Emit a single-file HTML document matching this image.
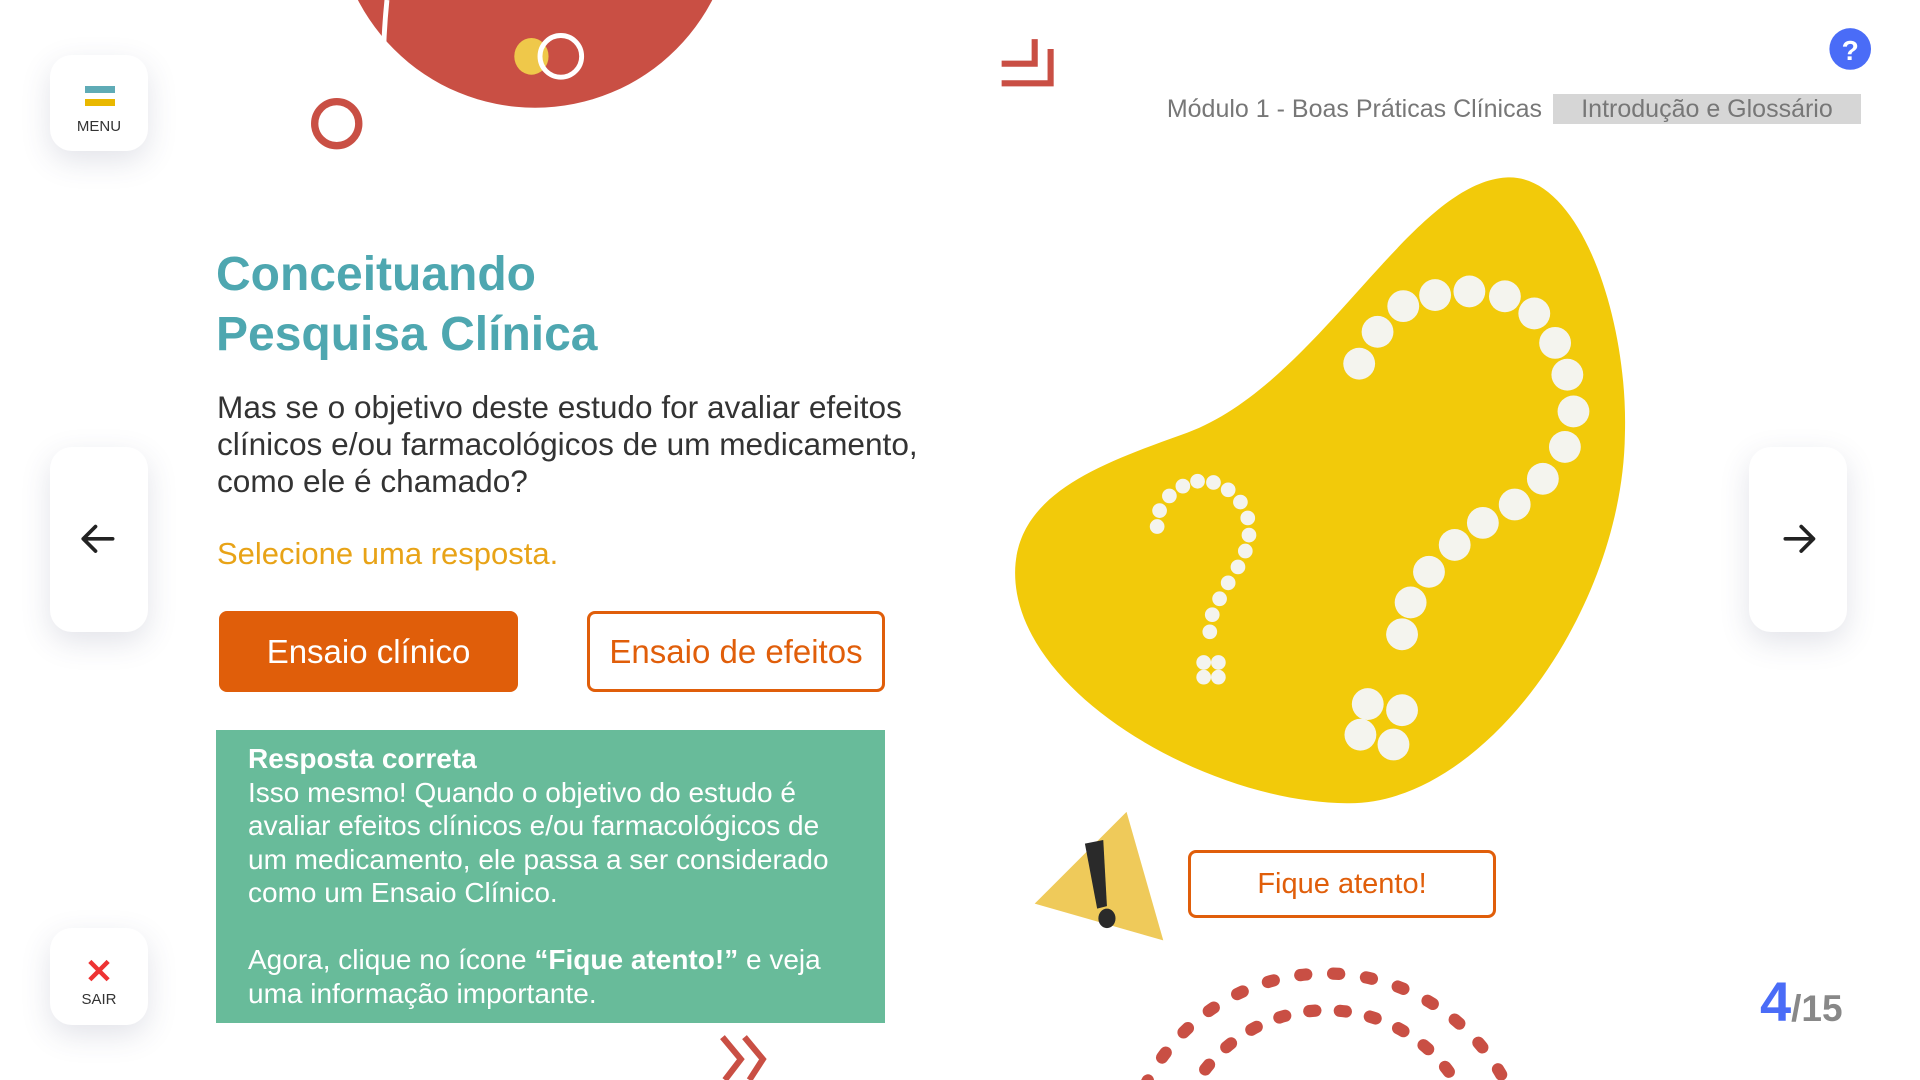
<!DOCTYPE html>
<html><head><meta charset="utf-8"><style>
*{margin:0;padding:0;box-sizing:border-box}
html,body{width:1920px;height:1080px;overflow:hidden}
body{background:#fff;font-family:"Liberation Sans",sans-serif;position:relative;color:#333}
.abs{position:absolute}
.card{position:absolute;background:#fff;border-radius:22px;box-shadow:0 10px 30px rgba(60,70,110,0.15)}
.btn{position:absolute;display:flex;align-items:center;justify-content:center;border-radius:8px;font-size:33px}
</style></head><body>
<svg class="abs" style="left:0;top:0;display:block" width="1920" height="1080" viewBox="0 0 1568 882">
<circle cx="437" cy="-75" r="163" fill="#c94f44"/>
<path d="M316,0 Q310,60 316,110" stroke="#fff" stroke-width="4" fill="none"/>
<ellipse cx="434" cy="46" rx="14" ry="15" fill="#efc84a"/>
<circle cx="458" cy="46" r="17" fill="none" stroke="#fff" stroke-width="4"/>
<circle cx="275" cy="101" r="18" fill="none" stroke="#c94f44" stroke-width="6"/>
<path d="M818,52 H845 V32 M818,68 H858 V40" stroke="#c94f44" stroke-width="5" fill="none"/>
<path d="M1230,145 C1290,141 1330,260 1327,355 C1325,500 1210,658 1100,656 C985,655 829,565 829,468 C829,405 895,380 965,355 C1075,318 1150,150 1230,145 Z" fill="#f2ca0a"/>
<g fill="#f4f4ee">
<circle cx="1110" cy="297" r="13"/><circle cx="1125" cy="271" r="13"/><circle cx="1146" cy="250" r="13"/><circle cx="1172" cy="241" r="13"/><circle cx="1200" cy="238" r="13"/><circle cx="1229" cy="242" r="13"/><circle cx="1253" cy="256" r="13"/><circle cx="1270" cy="280" r="13"/><circle cx="1280" cy="306" r="13"/><circle cx="1285" cy="336" r="13"/><circle cx="1278" cy="365" r="13"/><circle cx="1260" cy="391" r="13"/><circle cx="1237" cy="412" r="13"/><circle cx="1211" cy="427" r="13"/><circle cx="1188" cy="445" r="13"/><circle cx="1167" cy="467" r="13"/><circle cx="1152" cy="492" r="13"/><circle cx="1145" cy="518" r="13"/>
<circle cx="1117" cy="575" r="13"/><circle cx="1145" cy="580" r="13"/><circle cx="1111" cy="600" r="13"/><circle cx="1138" cy="608" r="13"/>
<circle cx="945" cy="430" r="6"/><circle cx="947" cy="417" r="6"/><circle cx="955" cy="405" r="6"/><circle cx="966" cy="397" r="6"/><circle cx="978" cy="393" r="6"/><circle cx="991" cy="394" r="6"/><circle cx="1003" cy="400" r="6"/><circle cx="1013" cy="410" r="6"/><circle cx="1019" cy="423" r="6"/><circle cx="1020" cy="437" r="6"/><circle cx="1017" cy="450" r="6"/><circle cx="1011" cy="463" r="6"/><circle cx="1003" cy="476" r="6"/><circle cx="996" cy="489" r="6"/><circle cx="990" cy="502" r="6"/><circle cx="988" cy="516" r="6"/>
<circle cx="983" cy="541" r="6"/><circle cx="995" cy="541" r="6"/><circle cx="983" cy="553" r="6"/><circle cx="995" cy="553" r="6"/>
</g>
<polygon points="920,663 950,768 845,738" fill="#efca5a"/>
<polygon points="886,689 901,686 904,740 896,742" fill="#2a2a2a"/>
<ellipse cx="904" cy="750" rx="7" ry="8" fill="#2a2a2a"/>
<circle cx="1083" cy="960" r="165" fill="none" stroke="#c94f44" stroke-width="10" stroke-linecap="round" stroke-dasharray="5 22"/>
<circle cx="1083" cy="950" r="125" fill="none" stroke="#c94f44" stroke-width="10" stroke-linecap="round" stroke-dasharray="5 20"/>
<path d="M590,847 L605,865 L592,882 M608,847 L623,865 L612,882" stroke="#c94f44" stroke-width="5" fill="none"/>
<circle cx="1511" cy="40" r="17" fill="#4a6cf7"/>
<text x="1511" y="49" font-size="23" font-weight="bold" fill="#fff" text-anchor="middle" font-family="Liberation Sans">?</text>
<path d="M92,440 H68 M78,430 L68,440 L78,450" stroke="#222" stroke-width="3" fill="none" stroke-linecap="round" stroke-linejoin="round"/>
<path d="M1458,440 H1481 M1471,430 L1481,440 L1471,450" stroke="#222" stroke-width="3" fill="none" stroke-linecap="round" stroke-linejoin="round"/>
</svg>

<div class="card" style="left:50px;top:55px;width:98px;height:96px"></div>
<div class="abs" style="left:85px;top:86px;width:30px;height:7px;background:#5fabb6"></div>
<div class="abs" style="left:85px;top:99px;width:30px;height:7px;background:#e9b800"></div>
<div class="abs" style="left:50px;top:118px;width:98px;text-align:center;font-size:15px;color:#333">MENU</div>

<div class="card" style="left:50px;top:447px;width:98px;height:185px;z-index:-1"></div>
<div class="card" style="left:1749px;top:447px;width:98px;height:185px;z-index:-1"></div>
<div class="card" style="left:50px;top:928px;width:98px;height:97px"></div>
<div class="abs" style="left:50px;top:952px;width:98px;text-align:center;font-size:34px;font-weight:bold;color:#e33">&#10005;</div>
<div class="abs" style="left:50px;top:991px;width:98px;text-align:center;font-size:15px;color:#333">SAIR</div>

<div class="abs" style="right:378px;top:94px;font-size:25px;color:#777;line-height:30px">Módulo 1 - Boas Práticas Clínicas</div>
<div class="abs" style="left:1553px;top:94px;width:308px;height:30px;background:#d6d6d6;color:#777;font-size:25px;line-height:30px;text-align:center">Introdução e Glossário</div>

<div class="abs" style="left:216px;top:245px;font-size:48px;font-weight:bold;color:#4ea7b0;line-height:60px">Conceituando<br>Pesquisa Clínica</div>
<div class="abs" style="left:217px;top:389px;font-size:31.6px;color:#333;line-height:37px">Mas se o objetivo deste estudo for avaliar efeitos<br>clínicos e/ou farmacológicos de um medicamento,<br>como ele é chamado?</div>
<div class="abs" style="left:217px;top:536px;font-size:31px;color:#e8a317;line-height:36px">Selecione uma resposta.</div>

<div class="btn" style="left:219px;top:611px;width:299px;height:81px;background:#e05e0a;color:#fff">Ensaio clínico</div>
<div class="btn" style="left:587px;top:611px;width:298px;height:81px;border:3px solid #e05e0a;color:#e05e0a">Ensaio de efeitos</div>

<div class="abs" style="left:216px;top:730px;width:669px;height:293px;background:#68bb9a;color:#fff;padding:12px 0 0 32px;font-size:28px;line-height:33.5px;overflow:hidden">
<b>Resposta correta</b><br>Isso mesmo! Quando o objetivo do estudo é<br>avaliar efeitos clínicos e/ou farmacológicos de<br>um medicamento, ele passa a ser considerado<br>como um Ensaio Clínico.<br><br>Agora, clique no ícone <b>“Fique atento!”</b> e veja<br>uma informação importante.</div>

<div class="btn" style="left:1188px;top:850px;width:308px;height:68px;border:3px solid #e05e0a;color:#e05e0a;font-size:29px">Fique atento!</div>

<div class="abs" style="left:1760px;top:972px;line-height:60px;white-space:nowrap"><span style="font-size:56px;font-weight:bold;color:#4a6cf7">4</span><span style="font-size:37px;color:#888;font-weight:bold">/15</span></div>
</body></html>
